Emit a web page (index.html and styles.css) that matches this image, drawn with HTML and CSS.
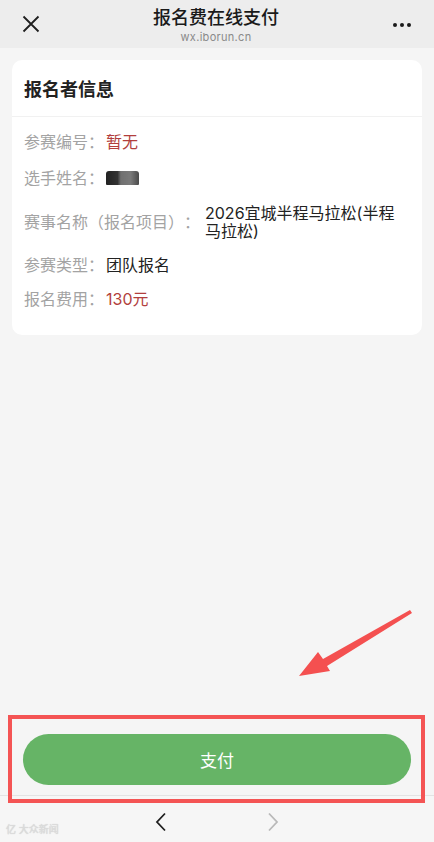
FILE: index.html
```html
<!DOCTYPE html>
<html lang="zh-CN">
<head>
  <meta charset="UTF-8" />
  <meta name="viewport" content="width=device-width, initial-scale=1" />
  <title>报名费在线支付</title>
  <link rel="stylesheet" href="styles.css">
</head>
<body>
  <header class="topbar">
    <button class="icon-btn close-btn" aria-label="关闭">
      <svg width="18" height="18" viewBox="0 0 18 18"><path d="M1.5 1.5L16.5 16.5M16.5 1.5L1.5 16.5" stroke="#1f1f1f" stroke-width="1.8" fill="none"/></svg>
    </button>
    <div class="title-block">
      <h1>报名费在线支付</h1>
      <p class="domain">wx.iborun.cn</p>
    </div>
    <button class="icon-btn more-btn" aria-label="更多">
      <span class="dot"></span><span class="dot"></span><span class="dot"></span>
    </button>
  </header>

  <main class="content">
    <section class="card">
      <h2 class="card-title">报名者信息</h2>
      <dl class="info-list">
        <div class="info-row">
          <dt>参赛编号：</dt>
          <dd class="red">暂无</dd>
        </div>
        <div class="info-row">
          <dt>选手姓名：</dt>
          <dd><span class="blurred-name" aria-label="已隐藏"></span></dd>
        </div>
        <div class="info-row">
          <dt>赛事名称（报名项目）：</dt>
          <dd class="wide">2026宜城半程马拉松(半程马拉松)</dd>
        </div>
        <div class="info-row">
          <dt>参赛类型：</dt>
          <dd>团队报名</dd>
        </div>
        <div class="info-row">
          <dt>报名费用：</dt>
          <dd class="red">130元</dd>
        </div>
      </dl>
    </section>
  </main>

  <div class="pay-area">
    <button class="pay-btn">支付</button>
  </div>

  <nav class="toolbar">
    <span class="watermark">亿 大众新闻</span>
    <button class="icon-btn nav-btn" aria-label="后退">
      <svg width="14" height="20" viewBox="0 0 14 20"><path d="M11 1.5L3 10L11 18.5" stroke="#1f1f1f" stroke-width="1.8" fill="none"/></svg>
    </button>
    <button class="icon-btn nav-btn" aria-label="前进">
      <svg width="14" height="20" viewBox="0 0 14 20"><path d="M3 1.5L11 10L3 18.5" stroke="#b9b9b9" stroke-width="1.8" fill="none"/></svg>
    </button>
  </nav>

  <!-- 标注 -->
  <div class="mark-box"></div>
  <svg class="mark-arrow" width="130" height="80" viewBox="290 605 130 80">
    <polygon points="299,676 318,652 323,659 410,610 412,613 327,666 330,671" fill="#f45050"/>
  </svg>
</body>
</html>
```

FILE: styles.css
```css
* {
  box-sizing: border-box;
}
body {
  margin: 0;
  height: 100vh;
  display: flex;
  flex-direction: column;
  background: #f5f5f5;
  font-family: Inter, "Noto Sans CJK SC", sans-serif;
  color: #1f1f1f;
  position: relative;
  overflow: hidden;
  text-spacing-trim: space-all;
}
button {
  font-family: inherit;
}
.icon-btn {
  background: none;
  border: none;
  padding: 0;
  cursor: pointer;
  display: flex;
  align-items: center;
  justify-content: center;
}
/* 顶部栏 */
.topbar {
  height: 48px;
  flex-shrink: 0;
  background: #ededed;
  display: flex;
  align-items: center;
  justify-content: space-between;
  padding: 0 22px 0 22px;
}
.close-btn {
  width: 18px;
  height: 18px;
  margin-top: -1px;
}
.title-block {
  text-align: center;
  margin-top: 2px;
}
.title-block h1 {
  margin: 0;
  font-size: 18px;
  font-weight: 500;
  line-height: 22px;
  color: #1a1a1a;
}
.domain {
  margin: 2px 0 0;
  font-size: 11px;
  line-height: 13px;
  color: #8a8a8a;
  letter-spacing: 0.3px;
}
.more-btn {
  gap: 3px;
  width: 20px;
  margin-top: 2px;
}
.dot {
  width: 4px;
  height: 4px;
  border-radius: 50%;
  background: #1a1a1a;
}
/* 卡片 */
.content {
  padding: 12px;
  flex-grow: 1;
}
.card {
  background: #fff;
  border-radius: 10px;
}
.card-title {
  margin: 0;
  height: 57px;
  display: flex;
  align-items: center;
  padding: 0 12px;
  font-size: 18px;
  font-weight: 700;
  color: #222;
  border-bottom: 1px solid #f1f1f1;
}
.info-list {
  margin: 0;
  padding: 16px 12px 27px;
  display: flex;
  flex-direction: column;
  gap: 16px;
}
.info-row {
  display: flex;
  align-items: center;
  gap: 2px;
  font-size: 16px;
  line-height: 18px;
}
.info-row dt {
  color: #a3a3a3;
  flex-shrink: 0;
}
.info-row dd {
  margin: 0;
  color: #222;
}
.info-row dd.wide {
  padding-left: 3px;
}
.info-row dd.red {
  color: #b23f3d;
}
.blurred-name {
  display: inline-block;
  width: 33px;
  height: 14px;
  margin-top: 4px;
  border-radius: 3px 3px 1px 1px;
  background: linear-gradient(90deg, #222 0%, #333 35%, #707070 45%, #7a7a7a 75%, #4a4a4a 100%);
  filter: blur(0.6px);
}
/* 支付按钮 */
.pay-area {
  flex-shrink: 0;
  padding: 0 23px 10px;
}
.pay-btn {
  width: 100%;
  height: 51px;
  border: none;
  border-radius: 26px;
  background: #66b466;
  color: #fff;
  font-size: 17px;
  cursor: pointer;
}
/* 底部导航 */
.toolbar {
  height: 47px;
  flex-shrink: 0;
  border-top: 1px solid #e3e3e3;
  background: #f6f6f6;
  display: flex;
  justify-content: center;
  align-items: center;
  gap: 98px;
  padding-top: 6px;
  position: relative;
}
.nav-btn {
  width: 14px;
  height: 20px;
}
.watermark {
  position: absolute;
  left: 6px;
  bottom: 6px;
  font-size: 10px;
  color: #dcdcdc;
  text-shadow: 0 0 1px #c4c4c4;
}
/* 标注 */
.mark-box {
  position: absolute;
  left: 8px;
  top: 715px;
  width: 417px;
  height: 88px;
  border: 4px solid #f45454;
}
.mark-arrow {
  position: absolute;
  left: 290px;
  top: 605px;
}
```
